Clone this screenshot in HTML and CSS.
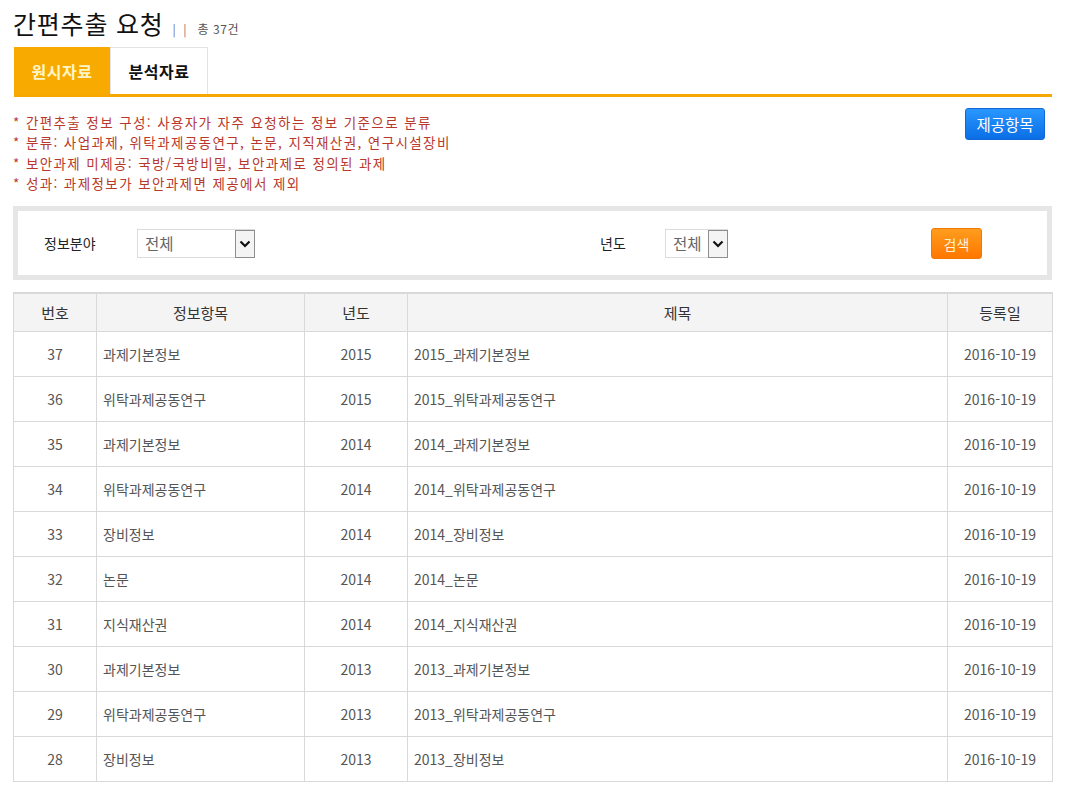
FILE: index.html
```html
<!DOCTYPE html>
<html lang="ko">
<head>
<meta charset="utf-8">
<title>간편추출 요청</title>
<link rel="stylesheet" href="styles.css">
</head>
<body>
<div class="page">
  <div class="title-row">
    <h1 class="title">간편추출 요청</h1>
    <span class="sep">| |</span>
    <span class="count">총 37건</span>
  </div>

  <div class="tabs">
    <div class="tab active">원시자료</div>
    <div class="tab">분석자료</div>
  </div>

  <div class="info">
    <ul class="notes">
      <li>* 간편추출 정보 구성: 사용자가 자주 요청하는 정보 기준으로 분류</li>
      <li>* 분류: 사업과제, 위탁과제공동연구, 논문, 지직재산권, 연구시설장비</li>
      <li>* 보안과제 미제공: 국방/국방비밀, 보안과제로 정의된 과제</li>
      <li>* 성과: 과제정보가 보안과제면 제공에서 제외</li>
    </ul>
    <button class="btn-blue">제공항목</button>
  </div>

  <div class="filter">
    <div class="filter-inner">
      <span class="flabel lbl-field">정보분야</span>
      <div class="select sel-wide"><span class="sel-text">전체</span><span class="sel-arrow"><svg width="12" height="8" viewBox="0 0 12 8"><path d="M1.5 1.5 L6 6 L10.5 1.5" fill="none" stroke="#111" stroke-width="2.2"/></svg></span></div>
      <span class="spacer1"></span>
      <span class="flabel lbl-year">년도</span>
      <div class="select sel-narrow"><span class="sel-text">전체</span><span class="sel-arrow"><svg width="12" height="8" viewBox="0 0 12 8"><path d="M1.5 1.5 L6 6 L10.5 1.5" fill="none" stroke="#111" stroke-width="2.2"/></svg></span></div>
      <span class="spacer2"></span>
      <button class="btn-orange">검색</button>
    </div>
  </div>

  <table class="list">
    <colgroup>
      <col class="c1"><col class="c2"><col class="c3"><col class="c4"><col class="c5">
    </colgroup>
    <thead>
      <tr><th>번호</th><th>정보항목</th><th>년도</th><th>제목</th><th>등록일</th></tr>
    </thead>
    <tbody>
      <tr><td class="ctr">37</td><td>과제기본정보</td><td class="ctr">2015</td><td>2015_과제기본정보</td><td class="ctr">2016-10-19</td></tr>
      <tr><td class="ctr">36</td><td>위탁과제공동연구</td><td class="ctr">2015</td><td>2015_위탁과제공동연구</td><td class="ctr">2016-10-19</td></tr>
      <tr><td class="ctr">35</td><td>과제기본정보</td><td class="ctr">2014</td><td>2014_과제기본정보</td><td class="ctr">2016-10-19</td></tr>
      <tr><td class="ctr">34</td><td>위탁과제공동연구</td><td class="ctr">2014</td><td>2014_위탁과제공동연구</td><td class="ctr">2016-10-19</td></tr>
      <tr><td class="ctr">33</td><td>장비정보</td><td class="ctr">2014</td><td>2014_장비정보</td><td class="ctr">2016-10-19</td></tr>
      <tr><td class="ctr">32</td><td>논문</td><td class="ctr">2014</td><td>2014_논문</td><td class="ctr">2016-10-19</td></tr>
      <tr><td class="ctr">31</td><td>지식재산권</td><td class="ctr">2014</td><td>2014_지식재산권</td><td class="ctr">2016-10-19</td></tr>
      <tr><td class="ctr">30</td><td>과제기본정보</td><td class="ctr">2013</td><td>2013_과제기본정보</td><td class="ctr">2016-10-19</td></tr>
      <tr><td class="ctr">29</td><td>위탁과제공동연구</td><td class="ctr">2013</td><td>2013_위탁과제공동연구</td><td class="ctr">2016-10-19</td></tr>
      <tr><td class="ctr">28</td><td>장비정보</td><td class="ctr">2013</td><td>2013_장비정보</td><td class="ctr">2016-10-19</td></tr>
    </tbody>
  </table>
</div>
</body>
</html>
```

FILE: styles.css
```css
* { box-sizing: border-box; }
html, body { margin: 0; padding: 0; background: #fff; }
body {
  font-family: "Noto Sans CJK KR", "Noto Sans", "Liberation Sans", sans-serif;
  color: #333;
}
.page {
  width: 1052px;
  padding-left: 13px;
}

/* title */
.title-row {
  display: flex;
  align-items: baseline;
  height: 47px;
  padding-top: 6px;
}
.title {
  margin: 0;
  font-size: 25px;
  font-weight: 400;
  line-height: 35px;
  color: #111;
  letter-spacing: 0.8px;
}
.sep {
  font-size: 12px;
  color: #777;
  margin-left: 9px;
  letter-spacing: 2px;
}
.count {
  font-size: 12px;
  color: #555;
  margin-left: 9px;
  letter-spacing: 0.6px;
}

/* tabs */
.tabs {
  display: flex;
  height: 50px;
  border-bottom: 3px solid #f6a800;
  margin-left: 1px;
}
.tab {
  height: 47px;
  display: flex;
  align-items: center;
  justify-content: center;
  font-size: 16px;
  font-weight: 700;
  color: #111;
  letter-spacing: 0.5px;
}
.tab.active {
  width: 96px;
  background: #f8aa00;
  color: #fff6c8;
}
.tab:not(.active) {
  width: 98px;
  border: 1px solid #e3e3e3;
  border-bottom: none;
}

/* info */
.info {
  display: flex;
  justify-content: space-between;
  align-items: flex-start;
  height: 109px;
  padding-top: 11px;
}
.notes {
  list-style: none;
  margin: 0;
  padding: 4px 0 0 0;
}
.notes li {
  font-size: 13.5px;
  line-height: 20.4px;
  color: #b8382c;
  letter-spacing: 1.4px;
}
.btn-blue {
  width: 80px;
  height: 32px;
  margin-right: 7px;
  border: 1px solid #1368d8;
  border-radius: 3px;
  background: linear-gradient(#2a97ff, #0a6ee6);
  color: #fff;
  font-family: inherit;
  font-size: 15.5px;
  padding: 0;
}

/* filter */
.filter {
  border: 5px solid #e6e6e6;
  height: 74px;
  width: 1039px;
}
.filter-inner {
  display: flex;
  align-items: center;
  height: 100%;
  padding-left: 26px;
}
.flabel {
  font-size: 14px;
  color: #222;
}
.lbl-field { width: 93px; }
.lbl-year { width: 65px; }
.spacer1 { width: 345px; }
.spacer2 { width: 203px; }
.select {
  display: flex;
  height: 29px;
  border: 1px solid #dcdcdc;
  border-right: none;
  margin-top: 1px;
}
.sel-wide { width: 118px; }
.sel-narrow { width: 63px; }
.sel-text {
  flex: 1;
  font-size: 15.5px;
  color: #666;
  padding-left: 7px;
  line-height: 27px;
}
.sel-arrow {
  width: 20px;
  height: 28px;
  border: 1px solid #8e8e8e;
  background: #f4f4f4;
  display: flex;
  align-items: center;
  justify-content: center;
}
.btn-orange {
  width: 51px;
  height: 31px;
  border: 1px solid #f07800;
  border-radius: 3px;
  background: linear-gradient(#ff9d1e, #ff7700);
  color: #fff3dc;
  font-family: inherit;
  font-size: 14px;
  padding: 0;
  margin-top: 1px;
}

/* table */
.list {
  margin-top: 12px;
  width: 1039px;
  border-collapse: collapse;
  border-top: 2px solid #d9d9d9;
  table-layout: fixed;
}
.c1 { width: 83px; }
.c2 { width: 208px; }
.c3 { width: 103px; }
.c4 { width: 540px; }
.c5 { width: 105px; }
.list th {
  height: 38px;
  background: #f4f4f4;
  font-size: 15px;
  font-weight: 400;
  color: #333;
  border: 1px solid #d9d9d9;
  padding: 0;
}
.list td {
  height: 45px;
  font-size: 14px;
  color: #555;
  border: 1px solid #d9d9d9;
  padding: 0 6px;
}
.list td.ctr { text-align: center; padding: 0; }
```
